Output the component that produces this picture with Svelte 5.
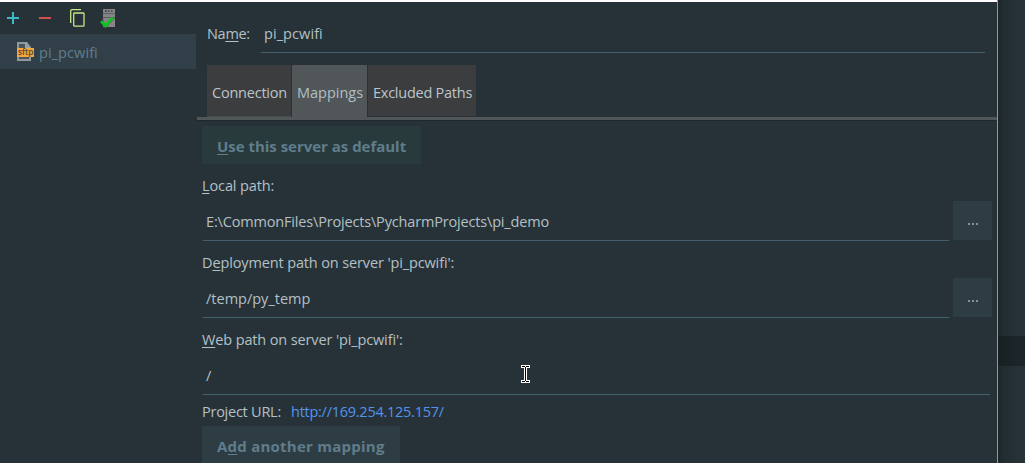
<script>
  let name = 'pi_pcwifi';
</script>

<div class="window">
  <main class="dialog">
    <aside>
      <div class="toolbar">
        <svg class="add" width="14" height="14" viewBox="0 0 14 14"><path d="M7 1v12M1 7h12" stroke="#3fb9c9" stroke-width="2" /></svg>
        <svg class="remove" width="12" height="14" viewBox="0 0 12 14"><path d="M0 7h12" stroke="#d3504e" stroke-width="2" /></svg>
        <svg class="copy" width="16" height="19" viewBox="0 0 16 19" fill="none" stroke="#c3e887" stroke-width="1.3"><path d="M.7 14V1.700Q.7.7 1.700.7H11" /><rect x="3.700" y="4" width="10.300" height="13.200" rx=".8" /></svg>
        <svg class="server" width="16" height="20" viewBox="0 0 16 20">
          <path d="M3 1h12v18H3z" fill="#858585" />
          <path d="M3 5h12v1H3zM3 9h12v1H3z" fill="#5b6163" />
          <path d="M5 3h2M8 3h1.500M11 3h1.500" stroke="#384044" stroke-width="1.500" />
          <path d="M3 10v7l3 2.500 8.500-9.500" fill="none" stroke="#565c5e" stroke-width="1" />
          <path d="M1 13.300l4.500 4.500L12.800 9.600" fill="none" stroke="#0cc41e" stroke-width="2.900" />
        </svg>
      </div>
      <div class="server-row">
        <svg width="18" height="20" viewBox="0 0 18 20">
          <path d="M0 0h10l4 5v14H0z" fill="#929899" /><path d="M2 2h6v4h4v11H2z" fill="#4a565b" />
          <path d="M9 1v4.500h4" fill="none" stroke="#a1a5a6" stroke-width="1.500" />
          <rect x="0" y="6" width="17" height="9" fill="#f2a83c" />
          <text x="1" y="13.200">sftp</text>
        </svg>
        <span class="t-name">{name}</span>
      </div>
    </aside>
    <section>
      <div class="name-row"><label for="server-name">Na<u>m</u>e:</label><div id="server-name" class="name-field t-name">{name}</div></div>
      <nav>
        <div class="tab first"><span>Connection</span></div>
        <div class="tab active"><span>Mappings</span></div>
        <div class="tab last"><span>Excluded Paths</span></div>
      </nav>
      <div class="body">
        <button class="default"><u>U</u>se this server as default</button>
        <div class="label local"><u>L</u>ocal path:</div>
        <div class="row"><div class="field t-local">E:\CommonFiles\Projects\PycharmProjects\pi_demo</div><button class="browse" aria-label="Browse"><i></i><i></i><i></i></button></div>
        <div class="label deploy">D<u>e</u>ployment path on server '{name}':</div>
        <div class="row"><div class="field t-temp">/temp/py_temp</div><button class="browse" aria-label="Browse"><i></i><i></i><i></i></button></div>
        <div class="label web"><u>W</u>eb path on server '{name}':</div>
        <div class="row wide"><div class="field">/</div></div>
        <div class="url"><span class="t-project">Project URL:</span><span class="link">http://169.254.125.157/</span></div>
        <button class="another">A<u>d</u>d another mapping</button>
      </div>
    </section>
  </main>
  <div class="backdrop"><div class="band"></div></div>
  <svg class="cursor" width="9" height="18" viewBox="0 0 9 18" shape-rendering="crispEdges">
    <path d="M0 0h9v3H6v12h3v3H0v-3h3V3H0z" fill="#fff" /><path d="M1 1h3v1h1V1h3v1H5v14h3v1H5v-1H4v1H1v-1h3V2H1z" fill="#000" />
  </svg>
</div>

<style>
  :global(body) { margin: 0; background: #263238; }
  .window { position: relative; display: flex; width: 1025px; height: 463px; overflow: hidden; font: 14.5px/20px "Open Sans", "Noto Sans", sans-serif; letter-spacing: -.3px; color: #b4c0c5; white-space: nowrap; }
  .window * { box-sizing: border-box; }
  .dialog { display: flex; width: 997px; height: 463px; border-top: 2px solid #fff; background: #263238; flex: none; }
  aside { width: 197px; flex: none; }
  .toolbar { display: flex; height: 32px; align-items: flex-start; }
  svg { display: block; flex: none; }
  .add { margin: 9px 0 0 6px; }
  .remove { margin: 9px 0 0 19px; }
  .copy { margin: 7px 0 0 19px; }
  .server { margin: 6px 0 0 14px; }
  .server-row { display: flex; width: 196px; height: 35px; padding: 8px 0 0 17px; background: #314048; color: #607d8b; }
  .server-row svg text { font: 600 8.5px "Open Sans", sans-serif; fill: #5b4630; letter-spacing: -.1px; }
  .server-row span { margin: 1px 0 0 4px; }
  section { width: 800px; flex: none; }
  .name-row { display: flex; height: 63px; padding: 22px 0 0 10px; }
  .name-row label { width: 54px; }
  .name-field { width: 724px; height: 29px; padding-left: 3px; border-bottom: 1px solid #43606d; }
  .t-name { letter-spacing: .08px; }
  u { text-decoration-thickness: 1px; text-underline-offset: 2px; text-decoration-skip-ink: none; }
  nav { display: flex; height: 55px; padding-left: 10px; border-bottom: 3px solid #515658; box-shadow: 0 1px #1e272b; }
  .tab { height: 51px; margin-right: 1px; padding: 18px 0 0 5px; background: #3c3d3f; color: #bbc5ca; letter-spacing: -.22px; }
  .first { width: 84px; height: 52px; border-bottom: 1px solid #484b4d; }
  .active { width: 75px; height: 52px; background: #515658; color: #b0bec5; letter-spacing: -.02px; }
  .last { width: 108px; letter-spacing: -.25px; }
  .body { padding: 6px 0 0 5px; }
  button { display: block; border: 0; margin: 0; padding: 0; font: 700 15px/20px "Open Sans", "Noto Sans", sans-serif; color: #607d8b; background: #2e3c43; text-align: left; }
  .default { width: 219px; height: 38px; padding: 1px 0 0 15px; background: #283a3c; letter-spacing: -.02px; }
  .label { height: 20px; }
  .local { margin-top: 12px; letter-spacing: -.12px; }
  .deploy, .web { margin-top: 12px; letter-spacing: -.13px; }
  .row { display: flex; height: 45px; gap: 4px; padding-left: 1px; }
  .field { width: 746px; height: 45px; padding: 16px 0 0 3px; border-bottom: 1px solid #43606d; }
  .t-local { letter-spacing: -.17px; }
  .t-temp { letter-spacing: 0; }
  .wide .field { width: 787px; }
  .browse { display: flex; width: 39px; height: 39px; margin-top: 5px; padding: 22px 0 0 15px; gap: 2px; }
  .browse i { width: 2px; height: 2px; background: #899195; }
  .url { display: flex; height: 31px; padding-top: 7px; }
  .t-project { width: 89px; letter-spacing: -.25px; }
  .link { color: #5394ec; letter-spacing: -.26px; }
  .another { width: 198px; height: 39px; padding: 1px 0 0 15px; letter-spacing: .24px; }
  .backdrop { width: 28px; height: 463px; padding-top: 336px; border-left: 1px solid #13c8ee; background: linear-gradient(90deg, #1d272a, #222d31 5px, #263238 22px); }
  .band { height: 30px; background: linear-gradient(90deg, #171f22, #1c262a 20px); }
  .cursor { position: absolute; left: 521px; top: 365px; }
</style>
